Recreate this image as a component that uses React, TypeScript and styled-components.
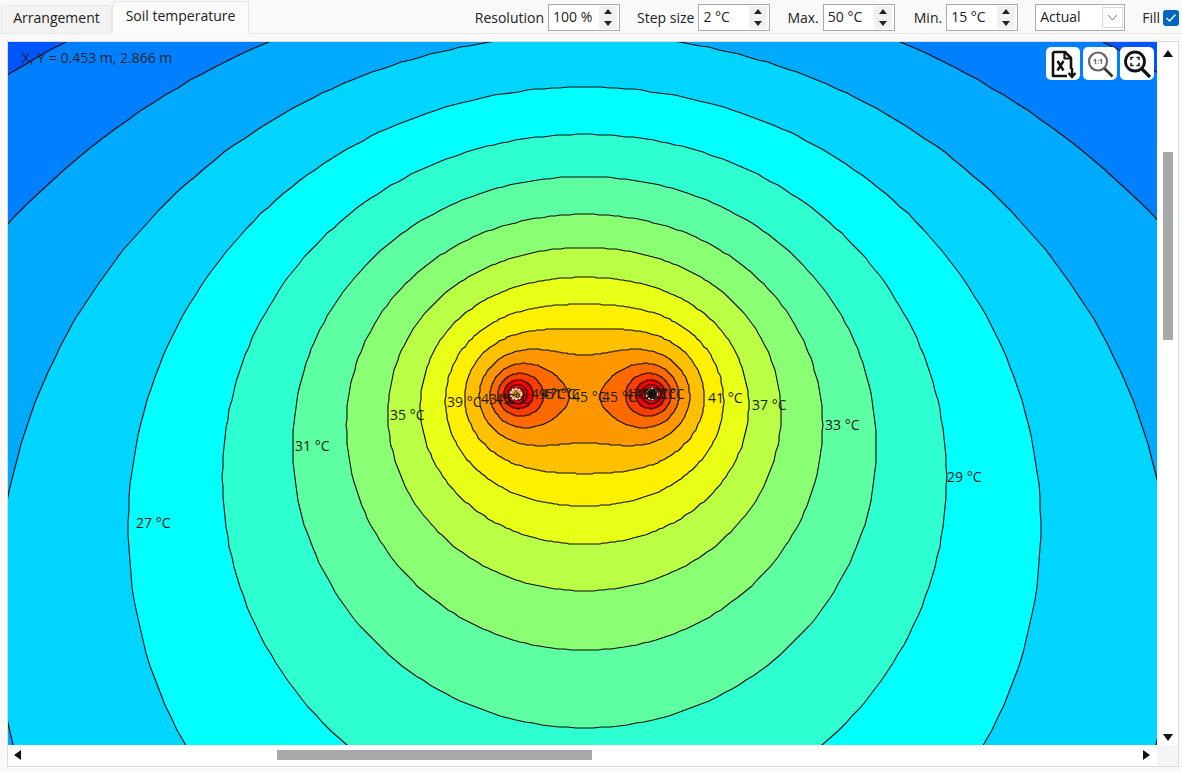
import React from "react";
import styled, { createGlobalStyle } from "styled-components";

const Global = createGlobalStyle`
  html, body { margin: 0; padding: 0; background: #f9f9f9; overflow: hidden; }
  * { box-sizing: border-box; }
`;

const FONT = `"Open Sans", "Noto Sans", "Liberation Sans", sans-serif`;

const Page = styled.div`
  width: 1182px;
  height: 772px;
  display: flex;
  flex-direction: column;
  font-family: ${FONT};
  font-size: 14px;
  color: #222;
  background: #f9f9f9;
`;

const TopBar = styled.header`
  height: 34px;
  flex: none;
  display: flex;
  justify-content: space-between;
  align-items: flex-end;
  border-bottom: 1px solid #e8e8e8;
  padding: 0 3px 0 0;
`;

const Tabs = styled.nav`
  display: flex;
  align-items: flex-end;
  height: 100%;
  padding-left: 1px;
`;

const Tab = styled.div<{ $active?: boolean }>`
  display: flex;
  align-items: center;
  justify-content: center;
  width: ${(p) => (p.$active ? "137px" : "111px")};
  height: ${(p) => (p.$active ? "33px" : "29px")};
  padding-bottom: ${(p) => (p.$active ? "4px" : "4px")};
  margin-bottom: -1px;
  background: ${(p) => (p.$active ? "#fbfbfb" : "#f3f3f3")};
  border: 1px solid #e6e6e6;
  border-bottom: ${(p) => (p.$active ? "1px solid #fbfbfb" : "1px solid #e6e6e6")};
  border-radius: 3px 3px 0 0;
  white-space: nowrap;
`;

const Controls = styled.div`
  display: flex;
  align-items: center;
  height: 100%;
  padding-top: 2px;
`;

const Field = styled.label<{ $after: number }>`
  display: flex;
  align-items: center;
  gap: 4px;
  margin-right: ${(p) => p.$after}px;
  white-space: nowrap;
`;

const SpinBox = styled.div`
  width: 72px;
  height: 27px;
  display: flex;
  align-items: center;
  justify-content: space-between;
  background: #fff;
  border: 1px solid #a9a9a9;
  padding: 0 2px 2px 4px;
`;

const Spinner = styled.div`
  width: 18px;
  height: 23px;
  display: flex;
  flex-direction: column;
  margin-top: 2px;
`;

const Step = styled.span<{ $down?: boolean }>`
  flex: 1;
  display: flex;
  align-items: center;
  justify-content: center;
  background: #f1f1f1;
  &::before {
    content: "";
    border-left: 4px solid transparent;
    border-right: 4px solid transparent;
    ${(p) => (p.$down ? "border-top: 5px solid #222;" : "border-bottom: 5px solid #222;")}
  }
`;

const Select = styled.div`
  width: 90px;
  height: 27px;
  margin-right: 17px;
  display: flex;
  align-items: center;
  justify-content: space-between;
  background: #fff;
  border: 1px solid #a9a9a9;
  padding: 0 1px 2px 4px;
`;

const SelectArrow = styled.span`
  width: 21px;
  height: 21px;
  margin-top: 2px;
  display: flex;
  align-items: center;
  justify-content: center;
  border: 1px solid #d8d8d8;
`;

const FillToggle = styled.div`
  display: flex;
  align-items: center;
  gap: 3px;
`;

const Check = styled.span`
  width: 16px;
  height: 16px;
  border-radius: 3px;
  background: #0067c0;
  display: flex;
  align-items: center;
  justify-content: center;
`;

const Viewer = styled.main`
  margin: 7px 3px 5px 7px;
  flex: 1;
  display: grid;
  grid-template-columns: 1fr 21px;
  grid-template-rows: 1fr 21px;
  border: 1px solid #dcdcdc;
  background: #fff;
  min-height: 0;
`;

const Plot = styled.div`
  position: relative;
  overflow: hidden;
  background: #0055ff;
`;

const PlotSvg = styled.svg`
  display: block;
  width: 1149px;
  height: 703px;
`;

const Coords = styled.div`
  position: absolute;
  left: 14px;
  top: 7px;
  font-size: 14px;
  line-height: 18px;
  color: #1c2430;
`;

const ToolButtons = styled.div`
  position: absolute;
  right: 3px;
  top: 5px;
  display: flex;
  gap: 3px;
`;

const ToolButton = styled.button`
  width: 34px;
  height: 33px;
  padding: 0;
  border: none;
  border-radius: 5px;
  background: #fff;
  display: flex;
  align-items: center;
  justify-content: center;
`;

const VScroll = styled.div`
  background: #fff;
  display: flex;
  flex-direction: column;
  align-items: center;
  justify-content: space-between;
  padding: 8px 0 4px;
`;

const HScroll = styled.div`
  background: #fff;
  display: flex;
  align-items: center;
  justify-content: space-between;
  padding: 0 7px 1px 6px;
`;

const Track = styled.div<{ $vertical?: boolean }>`
  flex: 1;
  align-self: stretch;
  display: flex;
  ${(p) => (p.$vertical ? "flex-direction: column; justify-content: flex-start; padding-top: 95px;" : "align-items: center; padding-left: 256px;")}
`;

const Thumb = styled.div<{ $vertical?: boolean }>`
  background: #a7a9ab;
  ${(p) => (p.$vertical ? "width: 10px; height: 188px; margin: 0 auto;" : "height: 10px; width: 315px;")}
`;

const Arrow = styled.span<{ $dir: "up" | "down" | "left" | "right" }>`
  flex: none;
  width: 0;
  height: 0;
  ${(p) =>
    p.$dir === "up"
      ? "border-left:5px solid transparent;border-right:5px solid transparent;border-bottom:7px solid #111;"
      : p.$dir === "down"
      ? "border-left:5px solid transparent;border-right:5px solid transparent;border-top:7px solid #111;"
      : p.$dir === "left"
      ? "border-top:5px solid transparent;border-bottom:5px solid transparent;border-right:7px solid #111;"
      : "border-top:5px solid transparent;border-bottom:5px solid transparent;border-left:7px solid #111;"}
`;

const Corner = styled.div`
  background: #f5f5f5;
`;

/* ---- temperature field: two buried sources and their mirror images ---- */
const SOURCES = [517, 652];
const SY = 394;
const IY = -930;
const field = (x: number, y: number) =>
  SOURCES.reduce((sum, sx) => {
    const dx = x - sx;
    const r = Math.hypot(dx, y - SY) || 0.01;
    return sum + Math.log(Math.hypot(dx, y - IY) / r);
  }, 0);
const levelOf = (t: number) => 2.353 + (t - 27) * 0.2033;

const toPath = (pts: number[][]) =>
  "M" + pts.map((p) => `${Math.round(p[0])} ${Math.round(p[1])}`).join("L") + "Z";

const outerContour = (t: number) => {
  const lv = levelOf(t);
  const pts: number[][] = [];
  const cx = 584.5;
  const cy = 400;
  for (let a = 0; a < 240; a++) {
    const th = (a / 240) * Math.PI * 2;
    const c = Math.cos(th);
    const s = Math.sin(th);
    let r = 3200;
    while (r > 0 && field(cx + c * r, cy + s * r) < lv) r -= 8;
    let lo = r;
    let hi = r + 8;
    for (let i = 0; i < 6; i++) {
      const m = (lo + hi) / 2;
      if (field(cx + c * m, cy + s * m) < lv) hi = m;
      else lo = m;
    }
    pts.push([cx + c * lo, cy + s * lo]);
  }
  return toPath(pts);
};

const islandContour = (sx: number, t: number) => {
  const lv = levelOf(t);
  const pts: number[][] = [];
  for (let a = 0; a < 120; a++) {
    const th = (a / 120) * Math.PI * 2;
    const c = Math.cos(th);
    const s = Math.sin(th);
    let r = 0.5;
    while (r < 200 && field(sx + c * r, SY + s * r) >= lv) r += 0.25;
    pts.push([sx + c * r, SY + s * r]);
  }
  return toPath(pts);
};

const OUTER: [number, string][] = [
  [21, "#0080ff"],
  [23, "#00aaff"],
  [25, "#00d5ff"],
  [27, "#00ffff"],
  [29, "#2effd1"],
  [31, "#5dffa2"],
  [33, "#8bff74"],
  [35, "#baff45"],
  [37, "#e8ff17"],
  [39, "#fff000"],
  [41, "#ffc000"],
  [43, "#ff9800"],
];
const INNER: [number, string][] = [
  [45, "#ff6a00"],
  [47, "#ff3c00"],
  [49, "#ff0000"],
  [51, "#ff0000"],
  [53, "#ff0000"],
];

const LABELS: [string, number, number][] = [
  ["27 °C", 136, 528],
  ["29 °C", 947, 482],
  ["31 °C", 295, 451],
  ["33 °C", 825, 430],
  ["35 °C", 390, 420],
  ["37 °C", 752, 410],
  ["39 °C", 447, 407],
  ["41 °C", 708, 403],
  ["43 °C", 481, 404],
  ["45 °C", 495, 404],
  ["49 °C", 531, 399],
  ["47 °C", 541, 399],
  ["51 °C", 546, 399],
  ["45 °C", 572, 402],
  ["45 °C", 602, 402],
  ["47 °C", 625, 399],
  ["49 °C", 634, 399],
  ["51 °C", 642, 399],
  ["53 °C", 650, 399],
];

const ContourPlot = () => {
  const shapes = React.useMemo(() => {
    const list: { d: string; fill: string }[] = OUTER.map(([t, fill]) => ({ d: outerContour(t), fill }));
    SOURCES.forEach((sx) =>
      INNER.forEach(([t, fill]) => list.push({ d: islandContour(sx, t), fill }))
    );
    return list;
  }, []);
  return (
    <PlotSvg viewBox="8 42 1149 703">
      {shapes.map((s, i) => (
        <path key={i} d={s.d} fill={s.fill} stroke="#0a0a0a" strokeWidth={1.1} />
      ))}
      <circle cx={516} cy={394} r={5.5} fill="#e8a050" stroke="#fff" strokeWidth={1.6} strokeDasharray="2 1.5" />
      <path d="M516 390l3.5 6h-7z" fill="#b07a20" stroke="#7a5a10" strokeWidth={0.8} />
      <circle cx={652} cy={394} r={5.5} fill="#3a1a08" stroke="#fff" strokeWidth={1.6} strokeDasharray="2 1.5" />
      <path d="M648 394h8M652 390v8M649 391l6 6M655 391l-6 6" stroke="#000" strokeWidth={1.2} />
      {LABELS.map(([t, x, y], i) => (
        <text key={i} x={x} y={y} fontFamily={FONT} fontSize={14} fill="#1c1c10">
          {t}
        </text>
      ))}
    </PlotSvg>
  );
};

const ExportIcon = () => (
  <svg width="30" height="30" viewBox="0 0 30 30" fill="none" stroke="#111">
    <path d="M5 3h12l6 6v11M5 3v24h14" strokeWidth="2.6" strokeLinejoin="round" />
    <path d="M16.5 3v6.5h6.500" strokeWidth="2.2" />
    <path d="M9.500 12l6 9.500M15.500 12l-6 9.500" strokeWidth="2.4" />
    <path d="M24 19v8M20.500 24l3.500 4 3.500-4" strokeWidth="2.4" />
  </svg>
);

const ZoomOneIcon = () => (
  <svg width="30" height="30" viewBox="0 0 30 30" fill="none">
    <circle cx="13" cy="12.5" r="9" stroke="#666" strokeWidth="2.2" />
    <path d="M19.500 19.500l8 8" stroke="#333" strokeWidth="2.6" />
    <text x="13" y="15" textAnchor="middle" fontSize="7" fontWeight="700" fontFamily={FONT} fill="#555">
      1:1
    </text>
  </svg>
);

const ZoomFitIcon = () => (
  <svg width="30" height="30" viewBox="0 0 30 30" fill="none">
    <circle cx="13" cy="12.5" r="9.500" stroke="#111" strokeWidth="2.800" />
    <path d="M20 20l8 8" stroke="#111" strokeWidth="3.200" />
    <path d="M9 11V8.500h2.500M14.500 8.500H17V11M17 14v2.500h-2.500M11.500 16.500H9V14" stroke="#222" strokeWidth="1.600" />
  </svg>
);

const SpinField = ({ label, value, after = 17 }: { label: string; value: string; after?: number }) => (
  <Field $after={after}>
    {label}
    <SpinBox>
      {value}
      <Spinner>
        <Step />
        <Step $down />
      </Spinner>
    </SpinBox>
  </Field>
);

export default function App() {
  return (
    <Page>
      <Global />
      <TopBar>
        <Tabs>
          <Tab>Arrangement</Tab>
          <Tab $active>Soil temperature</Tab>
        </Tabs>
        <Controls>
          <SpinField label="Resolution" value="100 %" />
          <SpinField label="Step size" value="2 °C" />
          <SpinField label="Max." value="50 °C" after={19} />
          <SpinField label="Min." value="15 °C" />
          <Select>
            Actual
            <SelectArrow>
              <svg width="11" height="7" viewBox="0 0 11 7" fill="none">
                <path d="M1 1l4.500 5L10 1" stroke="#777" strokeWidth="1" />
              </svg>
            </SelectArrow>
          </Select>
          <FillToggle>
            Fill
            <Check>
              <svg width="12" height="10" viewBox="0 0 12 10" fill="none">
                <path d="M1.500 5l3 3 6-6.500" stroke="#fff" strokeWidth="1.400" />
              </svg>
            </Check>
          </FillToggle>
        </Controls>
      </TopBar>
      <Viewer>
        <Plot>
          <ContourPlot />
          <Coords>X, Y = 0.453 m, 2.866 m</Coords>
          <ToolButtons>
            <ToolButton>
              <ExportIcon />
            </ToolButton>
            <ToolButton>
              <ZoomOneIcon />
            </ToolButton>
            <ToolButton>
              <ZoomFitIcon />
            </ToolButton>
          </ToolButtons>
        </Plot>
        <VScroll>
          <Arrow $dir="up" />
          <Track $vertical>
            <Thumb $vertical />
          </Track>
          <Arrow $dir="down" />
        </VScroll>
        <HScroll>
          <Arrow $dir="left" />
          <Track>
            <Thumb />
          </Track>
          <Arrow $dir="right" />
        </HScroll>
        <Corner />
      </Viewer>
    </Page>
  );
}
